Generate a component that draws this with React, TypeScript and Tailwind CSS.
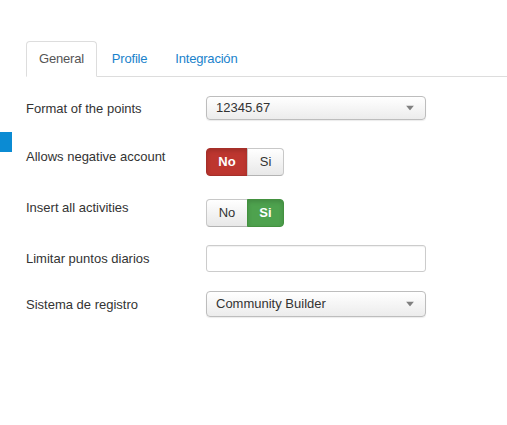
import React from "react";

const font = { fontFamily: '"Liberation Sans", Arial, Helvetica, sans-serif' };

function Caret() {
  return (
    <svg width="8" height="5" viewBox="0 0 8 5" className="absolute right-[11px] top-1/2 -translate-y-1/2">
      <path d="M0 0 L8 0 L4 5 Z" fill="#808080" />
    </svg>
  );
}

function SelectBox({ value, h }: { value: string; h: string }) {
  return (
    <div
      className={`relative w-[220px] ${h} rounded-[4px] border border-[#bdbdbd] bg-gradient-to-b from-white to-[#ececec] shadow-[0_1px_1px_rgba(0,0,0,0.08)] flex items-center pl-[9px] text-[13px] text-[#333]`}
    >
      {value}
      <Caret />
    </div>
  );
}

function YesNo({ active }: { active: "no" | "si" }) {
  const base = "h-[28px] flex items-center justify-center text-[13px] border";
  const off =
    "bg-gradient-to-b from-white to-[#e8e8e8] border-[#c8c8c8] border-b-[#b3b3b3] text-[#333]";
  return (
    <div className="flex">
      <div
        className={`${base} w-[42px] rounded-l-[4px] ${
          active === "no"
            ? "bg-[#bd362f] border-[#a52f29] text-white font-bold shadow-[inset_0_2px_4px_rgba(0,0,0,0.15)]"
            : off
        }`}
      >
        No
      </div>
      <div
        className={`${base} w-[37px] -ml-px rounded-r-[4px] ${
          active === "si"
            ? "bg-[#4ea24e] border-[#43913f] text-white font-bold shadow-[inset_0_2px_4px_rgba(0,0,0,0.15)]"
            : off
        }`}
      >
        Si
      </div>
    </div>
  );
}

export default function App() {
  return (
    <div className="relative w-[507px] h-[425px] bg-white overflow-hidden text-[#333]" style={font}>
      {/* side tab widget */}
      <div className="absolute left-0 top-[132px] w-[12px] h-[20px] bg-[#0b8bd3]" />

      <div className="pl-[26px] pt-[41px]">
        {/* tabs */}
        <ul className="flex border-b border-[#dddddd] text-[13px] leading-[18px] tracking-[-0.2px]">
          <li className="-mb-px mr-[2px]">
            <div className="px-[12px] py-[8px] border border-[#dddddd] border-b-white rounded-t-[4px] bg-white text-[#555]">
              General
            </div>
          </li>
          <li className="-mb-px mr-[2px]">
            <div className="px-[12px] py-[8px] border border-transparent text-[#1a82cc]">Profile</div>
          </li>
          <li className="-mb-px mr-[2px]">
            <div className="px-[12px] py-[8px] border border-transparent text-[#1a82cc]">Integración</div>
          </li>
        </ul>

        {/* form */}
        <div className="text-[13px] leading-[18px]">
          <div className="flex mt-[19px]">
            <div className="w-[180px] pt-[4px]">Format of the points</div>
            <SelectBox value="12345.67" h="h-[24px]" />
          </div>

          <div className="flex mt-[28px]">
            <div className="w-[180px]">Allows negative account</div>
            <YesNo active="no" />
          </div>

          <div className="flex mt-[23px]">
            <div className="w-[180px]">Insert all activities</div>
            <YesNo active="si" />
          </div>

          <div className="flex mt-[18px]">
            <div className="w-[180px] pt-[5px]">Limitar puntos diarios</div>
            <div className="w-[220px] h-[27px] rounded-[3px] border border-[#cccccc] bg-white shadow-[inset_0_1px_1px_rgba(0,0,0,0.06)]" />
          </div>

          <div className="flex mt-[19px]">
            <div className="w-[180px] pt-[5px]">Sistema de registro</div>
            <SelectBox value="Community Builder" h="h-[26px]" />
          </div>
        </div>
      </div>
    </div>
  );
}
